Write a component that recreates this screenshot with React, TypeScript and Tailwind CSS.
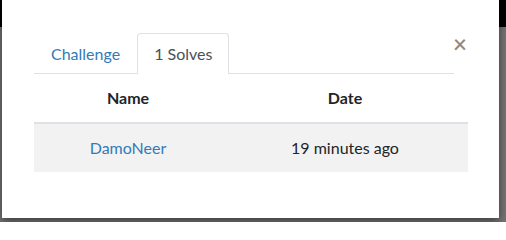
import React from "react";

export default function App() {
  return (
    <div
      className="relative w-[506px] h-[222px] overflow-hidden flex flex-col"
      style={{ fontFamily: "Lato, 'Open Sans', sans-serif" }}
    >
      <div className="h-[27px] bg-black" />
      <div className="flex-1 bg-[#747474]" />
      <div className="absolute left-[2px] top-0 w-[497px] h-[218px] bg-white shadow-[0_3px_9px_rgba(0,0,0,0.5)]">
        <div className="pl-[32px] pr-[31px] pt-[33px]">
          <div className="flex items-start">
            <div className="flex-1 flex border-b border-[#dee2e6] h-[41px]">
              <div className="h-[41px] px-[17px] flex items-center text-[16px] leading-6 text-[#337ab7]">
                Challenge
              </div>
              <div className="h-[41px] px-[16px] flex items-center text-[16px] leading-6 text-[#495057] border border-b-0 border-[#dee2e6] rounded-t-[4px] bg-white -mb-px">
                1 Solves
              </div>
            </div>
            <div className="w-[14px] flex justify-end">
              <span className="text-[24px] leading-none font-semibold text-[#8a8a8a] mt-[-1px] mr-[1px]">
                ×
              </span>
            </div>
          </div>
          <div className="grid grid-cols-[188px_246px] text-[16px] leading-6 text-[#212529]">
            <div className="py-3 text-center font-bold border-b-2 border-[#dee2e6]">Name</div>
            <div className="py-3 text-center font-bold border-b-2 border-[#dee2e6]">Date</div>
            <div className="py-3 text-center bg-[#f2f2f2] text-[#337ab7]">DamoNeer</div>
            <div className="py-3 text-center bg-[#f2f2f2]">19 minutes ago</div>
          </div>
        </div>
      </div>
    </div>
  );
}
